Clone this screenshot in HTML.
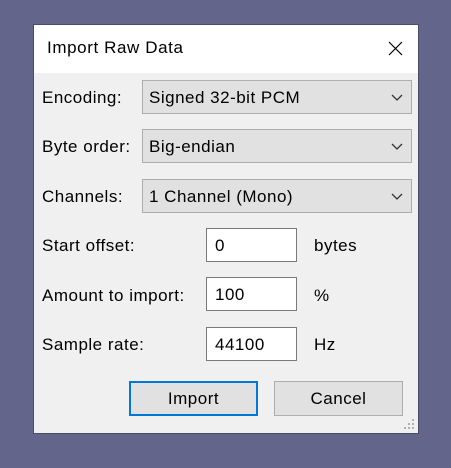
<!DOCTYPE html>
<html><head><style>
body{margin:0;width:451px;height:468px;background:#63658a;font-family:"Liberation Sans",sans-serif;font-size:17px;letter-spacing:0.5px;color:#000;position:relative;overflow:hidden}
.win{position:absolute;left:33px;top:24px;width:386px;height:410px;background:#f0f0f0;border:1px solid #4a4c6a;box-sizing:border-box}
.title{position:absolute;left:0;top:0;width:100%;height:48px;background:#fff}
.t{position:absolute;white-space:nowrap}
.combo{position:absolute;left:108px;width:270px;height:34px;box-sizing:border-box;background:#e1e1e1;border:1px solid #adadad}
.combo span{position:absolute;left:6px;top:7px}
.combo svg{position:absolute;right:8px;top:13px}
.inp{position:absolute;left:172px;width:91px;height:34px;box-sizing:border-box;background:#fff;border:1px solid #7a7a7a}
.inp span{position:absolute;left:8px;top:7px}
.btn{position:absolute;top:356px;width:129px;height:35px;box-sizing:border-box;background:#e1e1e1;border:1px solid #adadad;text-align:center;line-height:33px}
</style></head><body>
<div class="win">
<div class="title"><span class="t" style="left:13px;top:13px;font-size:17px;letter-spacing:0.6px">Import Raw Data</span>
<svg style="position:absolute;left:354px;top:16px" width="15" height="15"><path d="M1 1L14 14M14 1L1 14" stroke="#000" stroke-width="1.2"/></svg></div>
<span class="t" style="left:8px;top:63px">Encoding:</span>
<div class="combo" style="top:55px"><span>Signed 32-bit PCM</span><svg width="12" height="8"><path d="M1 1L6 6L11 1" stroke="#333" fill="none" stroke-width="1.3"/></svg></div>
<span class="t" style="left:8px;top:112px">Byte order:</span>
<div class="combo" style="top:104px"><span>Big-endian</span><svg width="12" height="8"><path d="M1 1L6 6L11 1" stroke="#333" fill="none" stroke-width="1.3"/></svg></div>
<span class="t" style="left:8px;top:162px">Channels:</span>
<div class="combo" style="top:154px"><span>1 Channel (Mono)</span><svg width="12" height="8"><path d="M1 1L6 6L11 1" stroke="#333" fill="none" stroke-width="1.3"/></svg></div>
<span class="t" style="left:8px;top:211px">Start offset:</span>
<div class="inp" style="top:203px"><span>0</span></div><span class="t" style="left:280px;top:211px">bytes</span>
<span class="t" style="left:8px;top:261px">Amount to import:</span>
<div class="inp" style="top:252px"><span>100</span></div><span class="t" style="left:280px;top:261px">%</span>
<span class="t" style="left:8px;top:310px">Sample rate:</span>
<div class="inp" style="top:302px"><span>44100</span></div><span class="t" style="left:280px;top:310px">Hz</span>
<div class="btn" style="left:95px;border:2px solid #0078d7;line-height:31px">Import</div>
<div class="btn" style="left:240px">Cancel</div>
<svg style="position:absolute;left:370px;top:394px" width="12" height="12"><g fill="#b0b0b0"><rect x="8" y="0" width="2" height="2"/><rect x="4" y="4" width="2" height="2"/><rect x="8" y="4" width="2" height="2"/><rect x="0" y="8" width="2" height="2"/><rect x="4" y="8" width="2" height="2"/><rect x="8" y="8" width="2" height="2"/></g></svg>
</div>
</body></html>
